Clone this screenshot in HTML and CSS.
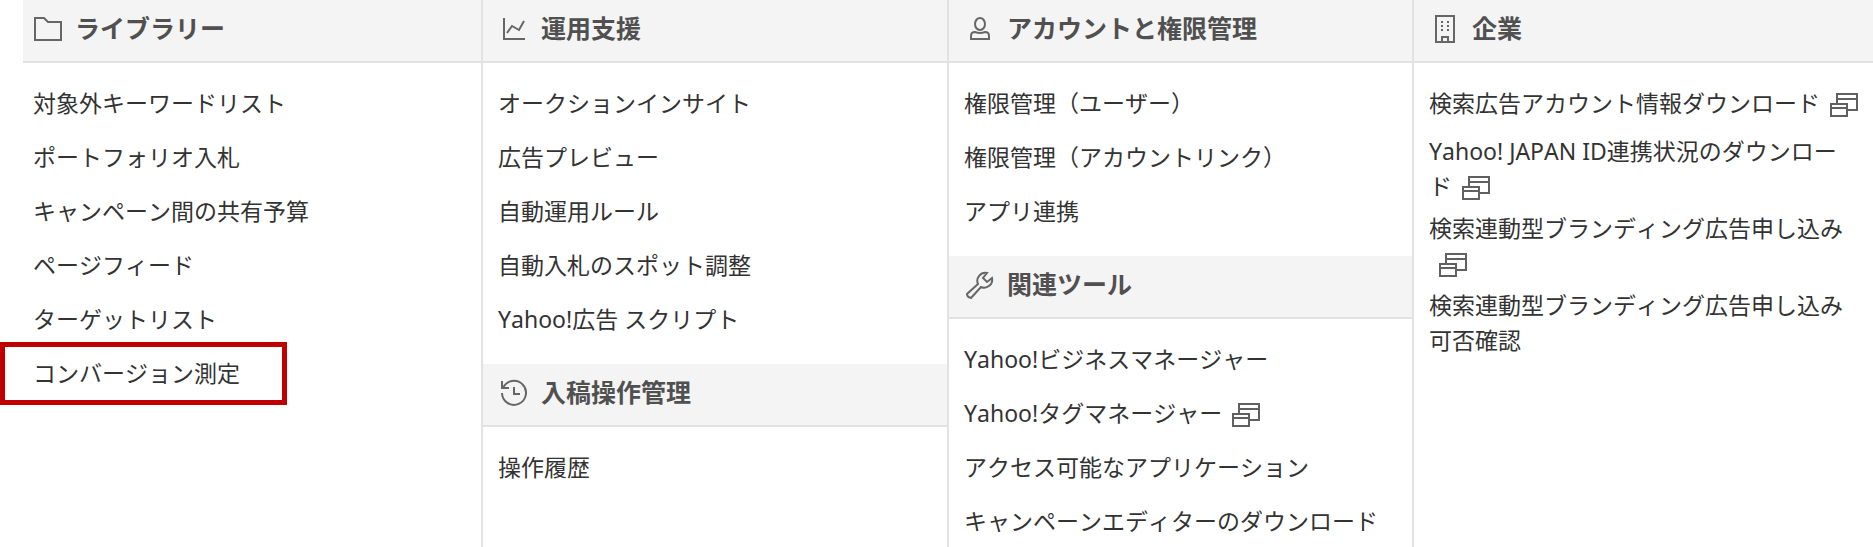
FILE: index.html
```html
<!DOCTYPE html>
<html lang="ja">
<head>
  <meta charset="UTF-8">
  <meta name="viewport" content="width=device-width, initial-scale=1.0">
  <title>ツールメニュー</title>
  <link rel="stylesheet" href="styles.css">
</head>
<body>
  <!-- 別ウィンドウアイコン -->
  <svg class="sprite" aria-hidden="true">
    <symbol id="icon-window" viewBox="0 0 28 24">
      <path d="M7 10V1h20v16h-9M7 6h20M1 11h16v12H1zM1 15h16" fill="none" stroke="currentColor" stroke-width="2"/>
    </symbol>
  </svg>

  <nav class="menu">
    <div class="column">
      <h2 class="heading">
        <svg class="icon" viewBox="0 0 28 28"><path d="M1 25V3h9l4 4h13v18z"/></svg>
        ライブラリー
      </h2>
      <ul class="list">
        <li><a href="#">対象外キーワードリスト</a></li>
        <li><a href="#">ポートフォリオ入札</a></li>
        <li><a href="#">キャンペーン間の共有予算</a></li>
        <li><a href="#">ページフィード</a></li>
        <li><a href="#">ターゲットリスト</a></li>
        <li class="marked"><a href="#">コンバージョン測定</a></li>
      </ul>
    </div>

    <div class="column">
      <h2 class="heading">
        <svg class="icon" viewBox="0 0 28 28"><path d="M4 3v21h21"/><path d="M7 18l5-7 7 4 5-9"/></svg>
        運用支援
      </h2>
      <ul class="list">
        <li><a href="#">オークションインサイト</a></li>
        <li><a href="#">広告プレビュー</a></li>
        <li><a href="#">自動運用ルール</a></li>
        <li><a href="#">自動入札のスポット調整</a></li>
        <li><a href="#">Yahoo!広告 スクリプト</a></li>
      </ul>
      <h2 class="heading">
        <svg class="icon" viewBox="0 0 28 28"><path d="M3 9a12 12 0 1 1-1 5M2 2v7h7M14 8v7h6"/></svg>
        入稿操作管理
      </h2>
      <ul class="list">
        <li><a href="#">操作履歴</a></li>
      </ul>
    </div>

    <div class="column">
      <h2 class="heading">
        <svg class="icon" viewBox="0 0 28 28"><ellipse cx="14" cy="9" rx="5" ry="6"/><path d="M5 24v-3q0-4 4-4 5 2 10 0 4 0 4 4v3z"/></svg>
        アカウントと権限管理
      </h2>
      <ul class="list">
        <li><a href="#">権限管理（ユーザー）</a></li>
        <li><a href="#">権限管理（アカウントリンク）</a></li>
        <li><a href="#">アプリ連携</a></li>
      </ul>
      <h2 class="heading">
        <svg class="icon" viewBox="0 0 28 28"><path d="M21 2a8 8 0 0 0-9 11L1 23q0 3 4 4l10-11a8 8 0 0 0 11-9l-5 4-4-4z"/></svg>
        関連ツール
      </h2>
      <ul class="list">
        <li><a href="#">Yahoo!ビジネスマネージャー</a></li>
        <li><a href="#">Yahoo!タグマネージャー<svg class="window"><use href="#icon-window"/></svg></a></li>
        <li><a href="#">アクセス可能なアプリケーション</a></li>
        <li><a href="#">キャンペーンエディターのダウンロード</a></li>
      </ul>
    </div>

    <div class="column">
      <h2 class="heading">
        <svg class="icon" viewBox="0 0 28 28"><path d="M5 1h18v26H5zM11 27v-5h6v5"/><path d="M10 7h2M16 7h2M10 11h2M16 11h2M10 15h2M16 15h2"/></svg>
        企業
      </h2>
      <ul class="list">
        <li><a href="#">検索広告アカウント情報ダウンロード<svg class="window"><use href="#icon-window"/></svg></a></li>
        <li><a href="#">Yahoo! JAPAN ID連携状況のダウンロード<svg class="window"><use href="#icon-window"/></svg></a></li>
        <li><a href="#">検索連動型ブランディング広告申し込み<svg class="window"><use href="#icon-window"/></svg></a></li>
        <li><a href="#">検索連動型ブランディング広告申し込み可否確認</a></li>
      </ul>
    </div>
  </nav>
</body>
</html>
```
FILE: styles.css
```css
*, *::after { box-sizing: border-box; margin: 0; padding: 0; }
body {
  font-family: "Noto Sans", "Noto Sans CJK JP", sans-serif;
  font-size: 23px;
  font-kerning: none;
  line-height: 35px;
  background: #fff;
  color: #333;
  overflow: hidden;
}
.sprite {
  display: none;
}
.menu {
  display: grid;
  grid-template-columns: 458fr 466fr 465fr 461fr;
  min-height: 100vh;
  padding-left: 23px;
}
.column {
  min-width: 0;
  border-left: 2px solid #e2e2e2;
}
.column:first-child {
  border-left: none;
}
.heading {
  display: flex;
  align-items: center;
  gap: 13px;
  padding: 11px 17px 15px;
  background: #f4f4f4;
  border-bottom: 2px solid #e2e2e2;
  color: #505050;
  font-size: 25px;
  line-height: 35px;
}
.column:first-child .heading {
  padding-left: 11px;
}
.icon {
  flex: none;
  width: 28px;
  height: 28px;
  fill: none;
  stroke: #666;
  stroke-width: 2;
}
.list {
  display: flex;
  flex-direction: column;
  gap: 7px;
  padding: 17px 14px 21px 15px;
  list-style: none;
}
.column:first-child .list {
  padding-left: 10px;
}
.list li {
  display: flex;
  align-items: center;
  min-height: 47px;
}
.list a {
  color: inherit;
  text-decoration: none;
}
.list a:hover {
  text-decoration: underline;
}
.window {
  width: 28px;
  height: 24px;
  margin-left: 10px;
  vertical-align: -5px;
  color: #606060;
}
/* 赤枠 */
.marked {
  position: relative;
}
.marked::after {
  content: "";
  position: absolute;
  top: -8px;
  left: -33px;
  width: 287px;
  height: 63px;
  border: 5px solid #c00000;
  pointer-events: none;
}
```
